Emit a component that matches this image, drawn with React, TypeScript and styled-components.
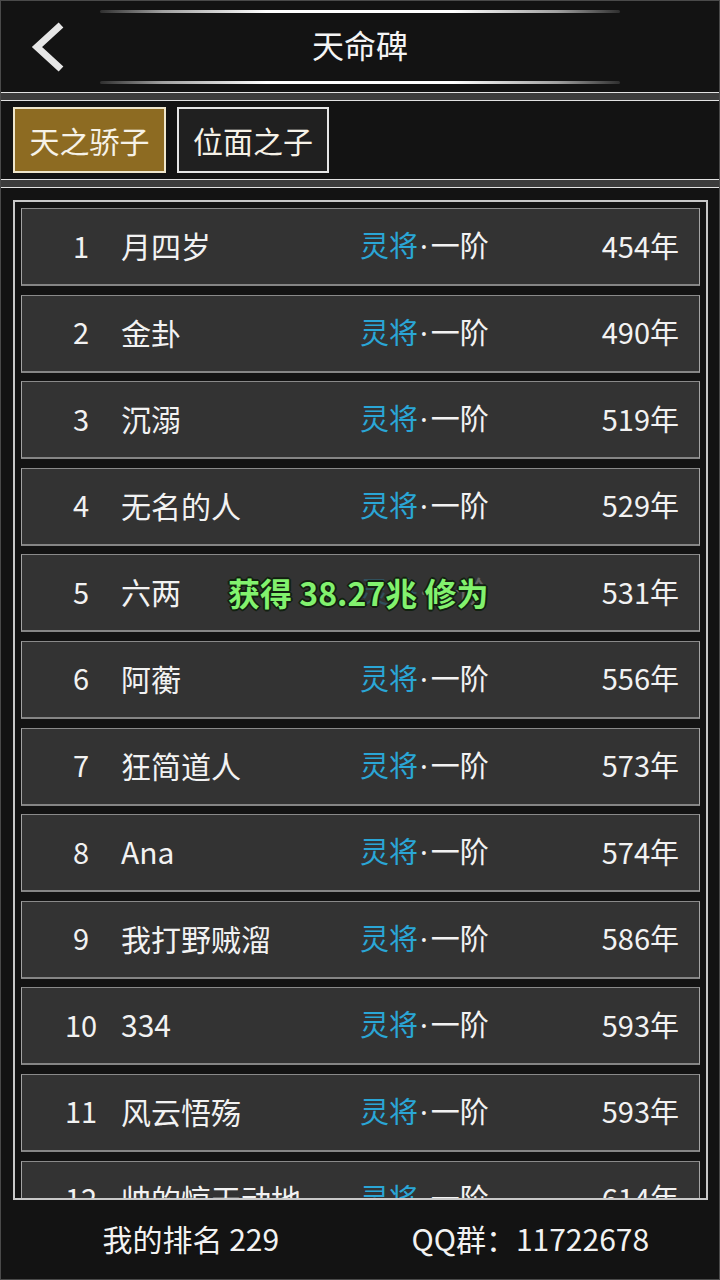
import React from "react";
import styled, { createGlobalStyle } from "styled-components";

const GlobalStyle = createGlobalStyle`
  html, body {
    margin: 0;
    padding: 0;
    background: #131313;
  }
  * { box-sizing: border-box; }
  body {
    font-family: "Noto Sans CJK SC", "Noto Sans", sans-serif;
  }
`;

const Root = styled.div`
  position: relative;
  width: 720px;
  height: 1280px;
  border: 1px solid #4a4a4a;
  background: #131313;
  display: flex;
  flex-direction: column;
  color: #f2f2f2;
  font-family: "Noto Sans CJK SC", "Noto Sans", sans-serif;
  overflow: hidden;
`;

const Header = styled.header`
  height: 91px;
  display: flex;
  flex-direction: column;
  align-items: center;
  flex-shrink: 0;
`;

const GlowLine = styled.div<{ $top?: number; $bottom?: number }>`
  width: 520px;
  height: 3px;
  flex-shrink: 0;
  border-radius: 2px;
  background: linear-gradient(
    90deg,
    rgba(90, 90, 90, 0.4) 0%,
    #a0a0a0 12%,
    #ffffff 32%,
    #ffffff 68%,
    #a0a0a0 88%,
    rgba(90, 90, 90, 0.4) 100%
  );
  margin-top: ${(p) => p.$top ?? 0}px;
  margin-bottom: ${(p) => p.$bottom ?? 0}px;
`;

const TitleRow = styled.div`
  flex: 1;
  width: 100%;
  display: grid;
  grid-template-columns: 1fr auto 1fr;
  align-items: center;
`;

const BackButton = styled.div`
  padding-left: 23px;
  display: flex;
  align-items: center;
  height: 100%;
`;

const Title = styled.h1`
  margin: 0 0 6px 0;
  font-size: 32px;
  font-weight: 400;
  color: #f4f4f4;
  line-height: 1;
`;

const Separator = styled.div`
  height: 9px;
  flex-shrink: 0;
  border-top: 1px solid #e2e2e2;
  border-bottom: 1px solid #e2e2e2;
  background: #3c3c3c;
`;

const TabBar = styled.nav`
  height: 78px;
  flex-shrink: 0;
  padding: 6px 12px;
  display: flex;
  gap: 11px;
`;

const TabButton = styled.div<{ $active?: boolean }>`
  width: ${(p) => (p.$active ? 153 : 152)}px;
  height: 66px;
  display: flex;
  align-items: center;
  justify-content: center;
  font-size: 30px;
  color: #f6f2e8;
  background: ${(p) => (p.$active ? "#8d6b22" : "#202020")};
  border: 2px solid ${(p) => (p.$active ? "#efe6cc" : "#e6e6e6")};
`;

const ListSection = styled.section`
  flex: 1;
  display: flex;
  flex-direction: column;
  padding: 12px 11px 0 12px;
`;

const ListBox = styled.div`
  height: 1000px;
  flex-shrink: 0;
  border: 2px solid #c8c8c8;
  padding: 6px 6px 0 6px;
  overflow: hidden;
  display: flex;
  flex-direction: column;
  gap: 8.6px;
`;

const Card = styled.div`
  height: 78px;
  flex-shrink: 0;
  background: #333333;
  border: 1px solid #a4a4a4;
  border-top-color: #8a8a8a;
  border-bottom: 2px solid #858585;
  display: grid;
  grid-template-columns: 80px 239px 1fr auto;
  align-items: center;
  padding: 0 20px 3px 19px;
  font-size: 29px;
  line-height: 1;
`;

const RankNo = styled.span`
  text-align: center;
`;

const Name = styled.span`
  white-space: nowrap;
  font-size: 30px;
`;

const Level = styled.span<{ $dim?: boolean }>`
  white-space: nowrap;
  opacity: ${(p) => (p.$dim ? 0.25 : 1)};
`;

const Realm = styled.span`
  color: #2aa6d6;
`;

const Dot = styled.span`
  font-family: "Noto Sans", sans-serif;
  margin: 0 3px 0 2px;
`;

const Years = styled.span`
  text-align: right;
`;

const Footer = styled.footer`
  flex: 1;
  display: grid;
  grid-template-columns: 1fr 1fr;
  align-items: center;
  padding: 0 8px;
  font-size: 30px;
  color: #f2f2f2;
`;

const FooterItem = styled.span`
  text-align: center;
  padding-bottom: 3px;
`;

const Toast = styled.div`
  position: absolute;
  left: 227px;
  top: 571px;
  line-height: 40px;
  font-size: 32px;
  font-weight: 700;
  color: #82f26e;
  white-space: nowrap;
  text-shadow:
    -2px 0 #122010, 2px 0 #122010, 0 -2px #122010, 0 2px #122010,
    -1px -1px #122010, 1px 1px #122010, -1px 1px #122010, 1px -1px #122010;
`;

const rows: [number, string, number][] = [
  [1, "月四岁", 454],
  [2, "金卦", 490],
  [3, "沉溺", 519],
  [4, "无名的人", 529],
  [5, "六两", 531],
  [6, "阿蘅", 556],
  [7, "狂简道人", 573],
  [8, "Ana", 574],
  [9, "我打野贼溜", 586],
  [10, "334", 593],
  [11, "风云悟殇", 593],
  [12, "帅的惊天动地", 614],
];

export default function App() {
  return (
    <Root>
      <GlobalStyle />
      <Header>
        <GlowLine $top={9} />
        <TitleRow>
          <BackButton>
            <svg width="44" height="56" viewBox="0 0 44 56">
              <polyline
                points="37,6 13,28 37,50"
                fill="none"
                stroke="#e6e6e6"
                strokeWidth="7"
                strokeLinejoin="miter"
              />
            </svg>
          </BackButton>
          <Title>天命碑</Title>
          <div />
        </TitleRow>
        <GlowLine $bottom={8} />
      </Header>
      <Separator />
      <TabBar>
        <TabButton $active>天之骄子</TabButton>
        <TabButton>位面之子</TabButton>
      </TabBar>
      <Separator />
      <ListSection>
        <ListBox>
          {rows.map(([no, name, years]) => (
            <Card key={no}>
              <RankNo>{no}</RankNo>
              <Name>{name}</Name>
              <Level $dim={no === 5}>
                <Realm>灵将</Realm>
                <Dot>·</Dot>一阶
              </Level>
              <Years>{years}年</Years>
            </Card>
          ))}
        </ListBox>
        <Footer>
          <FooterItem>我的排名 229</FooterItem>
          <FooterItem>QQ群：11722678</FooterItem>
        </Footer>
      </ListSection>
      <Toast>获得 38.27兆 修为</Toast>
    </Root>
  );
}
